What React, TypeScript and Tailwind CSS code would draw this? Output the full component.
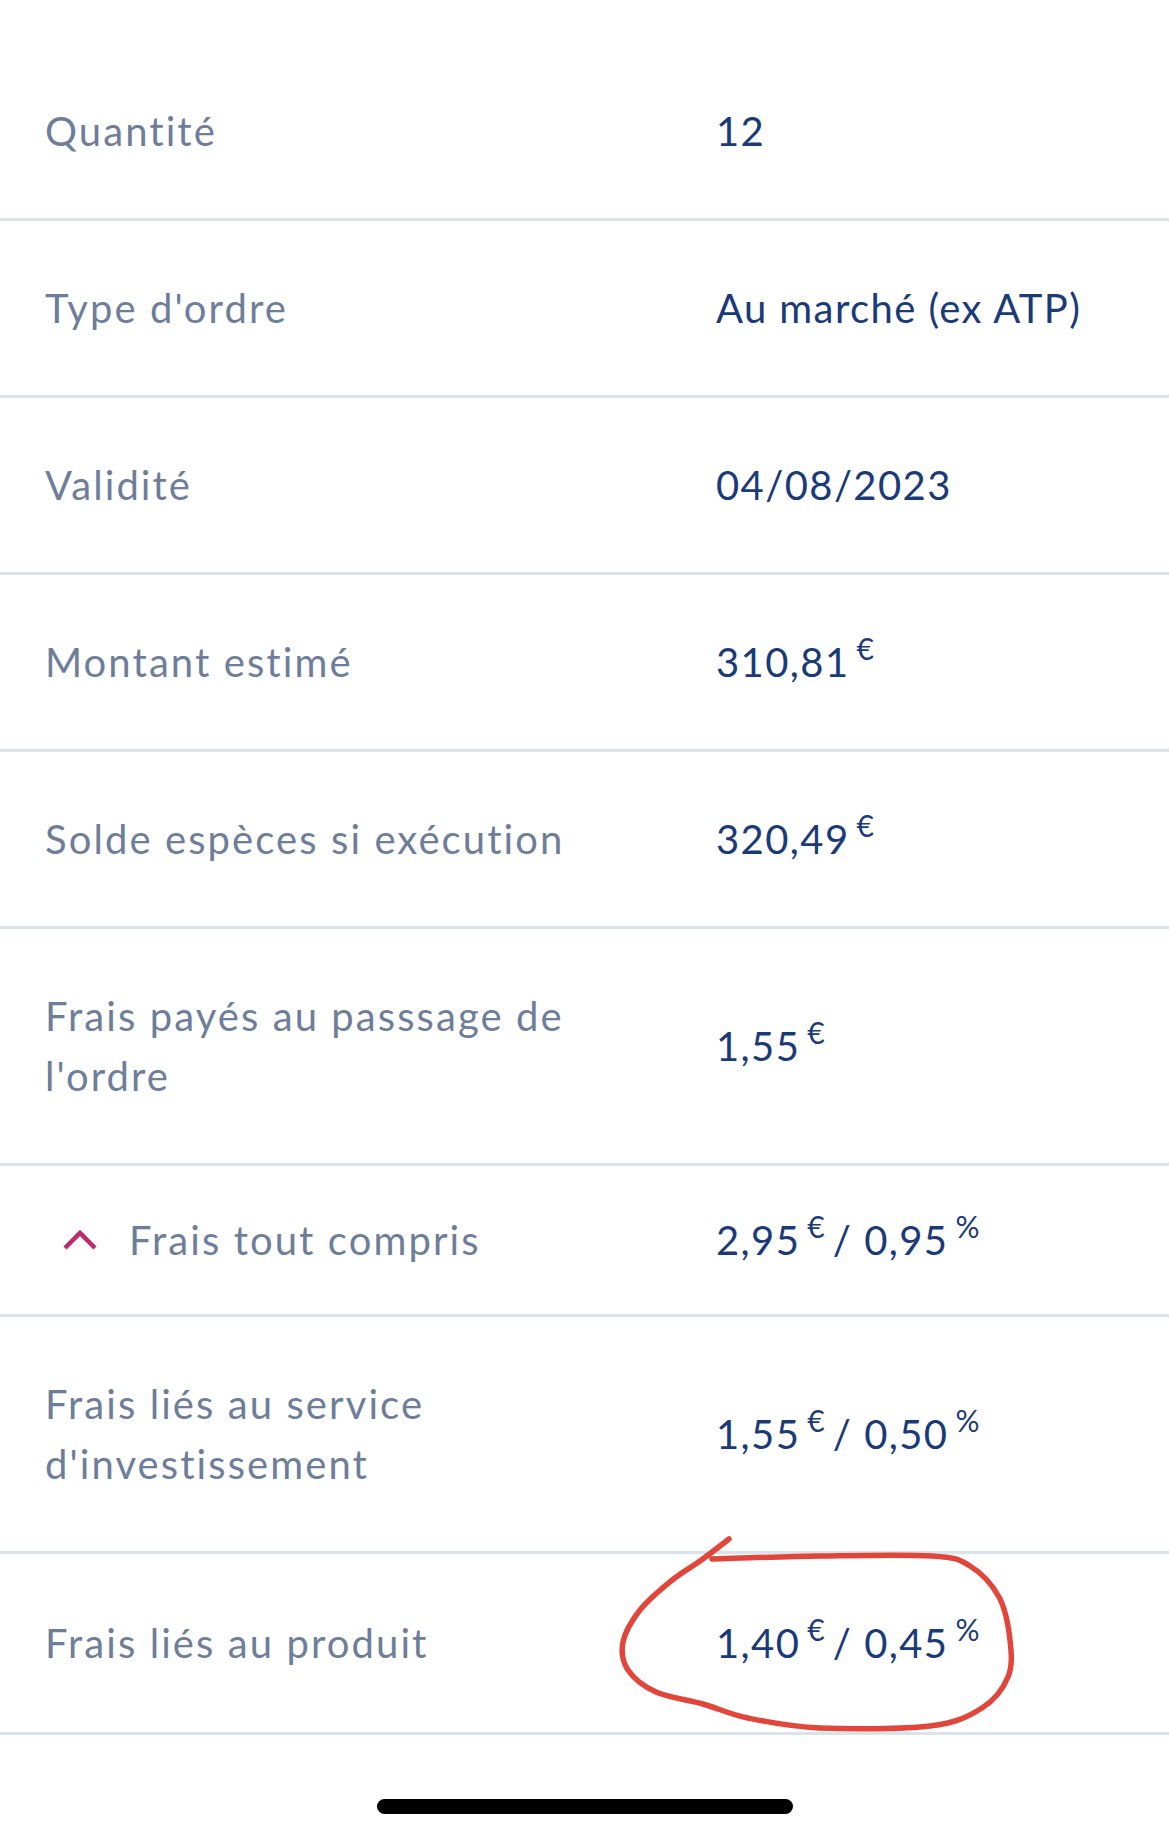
import React from "react";

type Pt = [number, number];

function smoothPath(pts: Pt[]): string {
  let d = `M${pts[0][0]},${pts[0][1]}`;
  for (let i = 0; i < pts.length - 1; i++) {
    const p0 = pts[i - 1] || pts[i];
    const p1 = pts[i];
    const p2 = pts[i + 1];
    const p3 = pts[i + 2] || p2;
    const c1x = p1[0] + (p2[0] - p0[0]) / 6;
    const c1y = p1[1] + (p2[1] - p0[1]) / 6;
    const c2x = p2[0] - (p3[0] - p1[0]) / 6;
    const c2y = p2[1] - (p3[1] - p1[1]) / 6;
    d += ` C${c1x.toFixed(1)},${c1y.toFixed(1)} ${c2x.toFixed(1)},${c2y.toFixed(1)} ${p2[0]},${p2[1]}`;
  }
  return d;
}

const circlePts: Pt[] = [
  [729, 1539],
  [700, 1561],
  [671, 1581],
  [640, 1610],
  [623, 1642],
  [628, 1670],
  [656, 1692],
  [703, 1704],
  [748, 1718],
  [820, 1728],
  [930, 1726],
  [982, 1708],
  [1008, 1677],
  [1010, 1640],
  [999, 1597],
  [970, 1566],
  [932, 1556],
  [820, 1556],
  [712, 1559],
];

const circleD = smoothPath(circlePts);

function Sup({ children }: { children: React.ReactNode }) {
  return (
    <span className="relative -top-[17px] ml-[7px] text-[30px] leading-none tracking-normal">
      {children}
    </span>
  );
}

function Row({
  label,
  value,
  py,
  chevron,
}: {
  label: React.ReactNode;
  value: React.ReactNode;
  py: string;
  chevron?: boolean;
}) {
  return (
    <div className={`flex items-center border-b-[3px] border-[#dce2ea] ${py}`}>
      <div className="w-[716px] shrink-0 pl-[45px] pr-[40px] flex items-center">
        {chevron && (
          <svg
            width="36"
            height="22"
            viewBox="0 0 36 22"
            className="ml-[17px] mr-[31px] shrink-0"
          >
            <polyline
              points="3,19 18,4 33,19"
              fill="none"
              stroke="#c0286e"
              strokeWidth="4.5"
              strokeLinecap="butt"
              strokeLinejoin="miter"
            />
          </svg>
        )}
        <div className="text-[#6e7e9a] text-[40px] leading-[60px] tracking-[0.052em]">
          {label}
        </div>
      </div>
      <div className="flex-1 text-[#1b3a78] text-[40px] leading-[60px] tracking-[0.035em] whitespace-nowrap">
        {value}
      </div>
    </div>
  );
}

export default function App() {
  return (
    <div className="relative w-[1169px] min-h-[1839px] bg-white font-[family-name:Lato,sans-serif] overflow-hidden">
      <div className="pt-[44px]">
        <Row py="py-[57px]" label="Quantité" value="12" />
        <Row py="py-[57px]" label="Type d'ordre" value="Au marché (ex ATP)" />
        <Row py="py-[57px]" label="Validité" value="04/08/2023" />
        <Row
          py="py-[57px]"
          label="Montant estimé"
          value={
            <>
              310,81<Sup>€</Sup>
            </>
          }
        />
        <Row
          py="py-[57px]"
          label="Solde espèces si exécution"
          value={
            <>
              320,49<Sup>€</Sup>
            </>
          }
        />
        <Row
          py="py-[57px]"
          label={
            <>
              Frais payés au passsage de
              <br />
              l'ordre
            </>
          }
          value={
            <>
              1,55<Sup>€</Sup>
            </>
          }
        />
        <Row
          py="py-[44px]"
          chevron
          label="Frais tout compris"
          value={
            <>
              2,95<Sup>€</Sup>
              <span className="ml-[8px]">/</span>
              <span className="ml-[12px]">0,95</span>
              <Sup>%</Sup>
            </>
          }
        />
        <Row
          py="py-[57px]"
          label={
            <>
              Frais liés au service
              <br />
              d'investissement
            </>
          }
          value={
            <>
              1,55<Sup>€</Sup>
              <span className="ml-[8px]">/</span>
              <span className="ml-[12px]">0,50</span>
              <Sup>%</Sup>
            </>
          }
        />
        <Row
          py="py-[59px]"
          label="Frais liés au produit"
          value={
            <>
              1,40<Sup>€</Sup>
              <span className="ml-[8px]">/</span>
              <span className="ml-[12px]">0,45</span>
              <Sup>%</Sup>
            </>
          }
        />
      </div>
      <div className="mt-[64px] pb-[20px] flex justify-center">
        <div className="w-[416px] h-[15px] rounded-full bg-black" />
      </div>
      <svg
        className="absolute inset-0 pointer-events-none"
        width="1169"
        height="1839"
        viewBox="0 0 1169 1839"
      >
        <path
          d={circleD}
          fill="none"
          stroke="#e2463a"
          strokeWidth="5.5"
          strokeLinecap="round"
          strokeLinejoin="round"
        />
      </svg>
    </div>
  );
}
